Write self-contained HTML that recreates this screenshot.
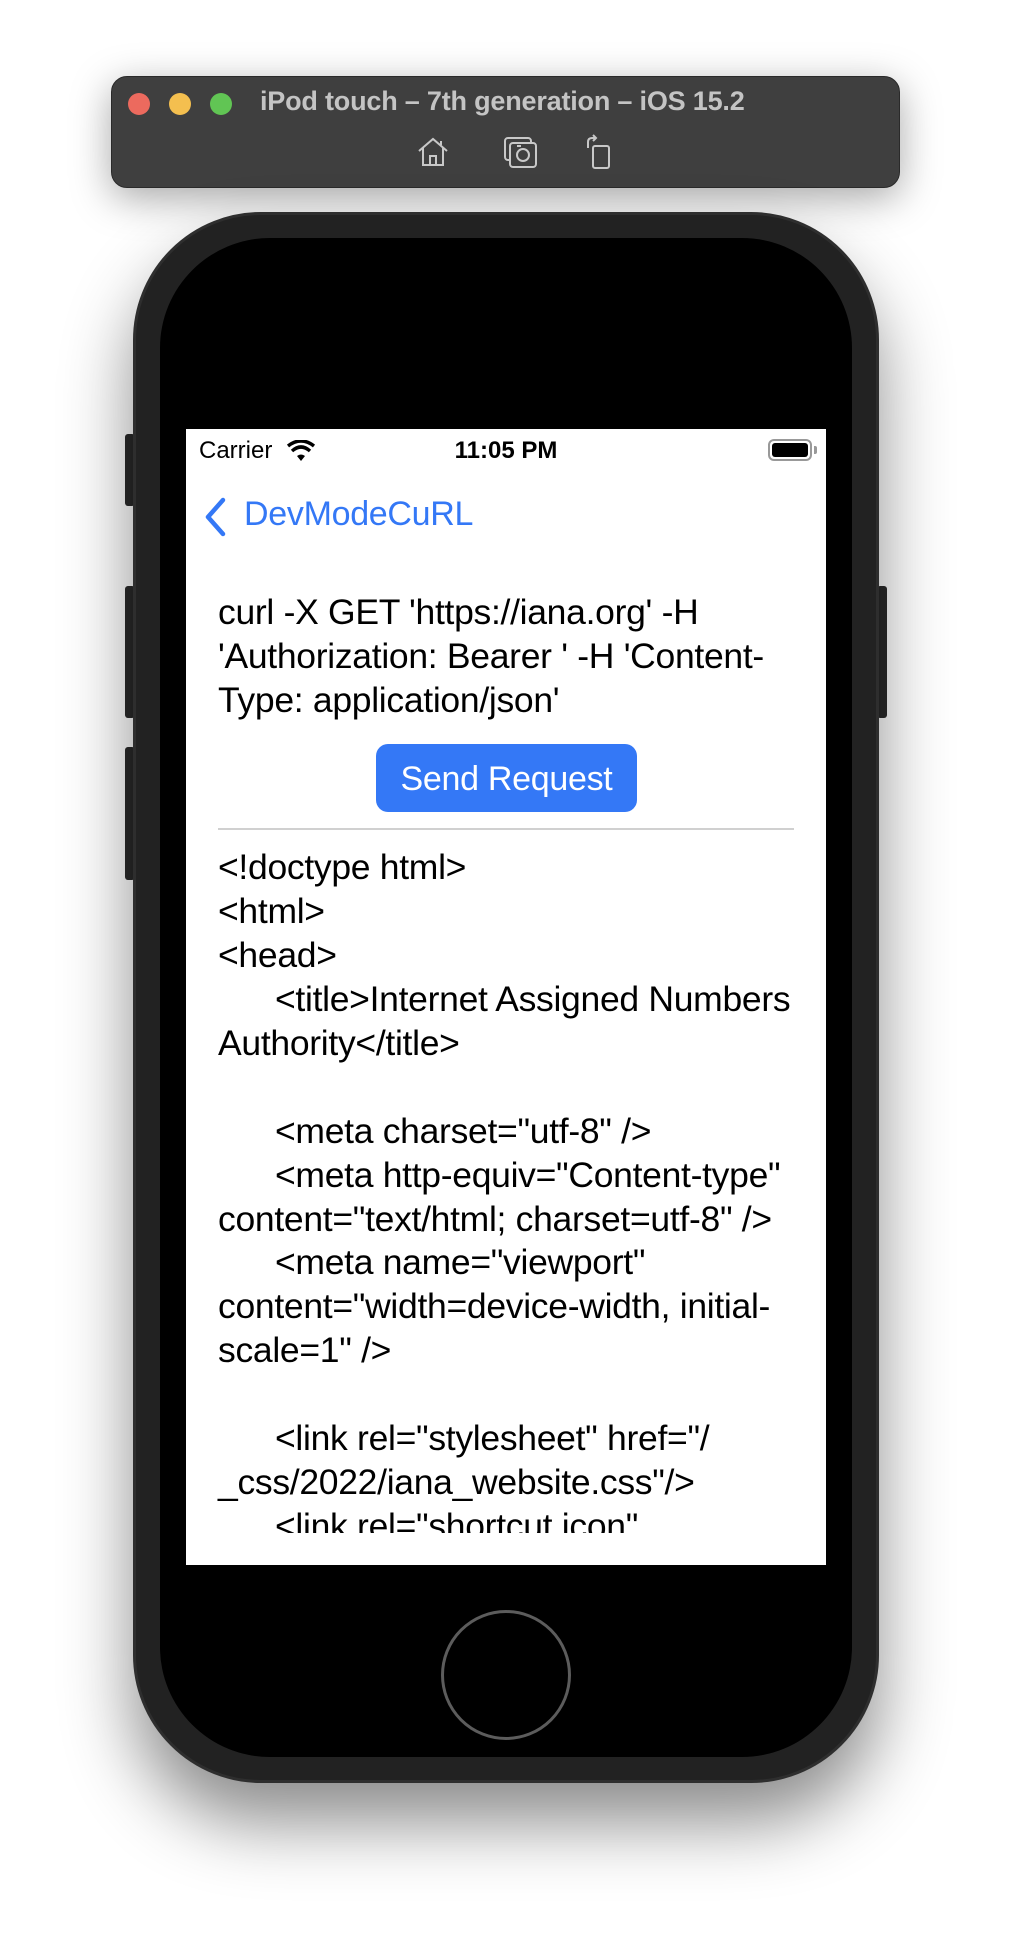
<!DOCTYPE html>
<html><head><meta charset="utf-8"><style>
*{margin:0;padding:0;box-sizing:border-box}
body{width:1012px;height:1936px;background:#fff;position:relative;overflow:hidden;font-family:"Liberation Sans",sans-serif}
.a{position:absolute}
.ln{position:absolute;left:218px;white-space:nowrap;font-size:35.5px;line-height:44px;height:44px;color:#000;letter-spacing:-0.3px}
.in{left:275px}
</style></head><body>
<!-- toolbar -->
<div class="a" style="left:111px;top:76px;width:789px;height:112px;background:#3f3f3f;border-radius:16px;border:1px solid #2a2a2a;box-shadow:0 10px 40px rgba(0,0,0,.35)"></div>
<div class="a" style="left:128px;top:93px;width:22px;height:22px;border-radius:50%;background:#ec6a5e"></div>
<div class="a" style="left:169px;top:93px;width:22px;height:22px;border-radius:50%;background:#f4bf4f"></div>
<div class="a" style="left:210px;top:93px;width:22px;height:22px;border-radius:50%;background:#61c554"></div>
<div class="a" style="left:260px;top:86px;font-size:27px;font-weight:bold;color:#c4c4c4;white-space:nowrap;letter-spacing:-0.2px">iPod touch – 7th generation – iOS 15.2</div>
<svg class="a" style="left:415px;top:136px" width="36" height="32" viewBox="0 0 36 32" fill="none" stroke="#c8c8c8" stroke-width="2"><path d="M4 15 L18 3 L32 15 M8 12 V29 H28 V12 M15 29 V20 H21 V29"/><path d="M26 5 V9"/></svg>
<svg class="a" style="left:502px;top:135px" width="36" height="34" viewBox="0 0 36 34" fill="none" stroke="#c8c8c8" stroke-width="2"><rect x="3" y="3" width="26" height="22" rx="3"/><rect x="8" y="8" width="26" height="24" rx="3" fill="#3f3f3f"/><circle cx="21" cy="20" r="6"/><path d="M15 11 h4"/></svg>
<svg class="a" style="left:584px;top:134px" width="30" height="36" viewBox="0 0 30 36" fill="none" stroke="#c8c8c8" stroke-width="2"><rect x="9" y="12" width="16" height="22" rx="2"/><path d="M4 14 V8 Q4 4 8 4 H12 M9 1 L12 4 L9 7"/></svg>
<!-- phone -->
<div class="a" style="left:125px;top:434px;width:10px;height:72px;background:#2a2a2a;border-radius:3px"></div>
<div class="a" style="left:125px;top:586px;width:10px;height:132px;background:#2a2a2a;border-radius:3px"></div>
<div class="a" style="left:125px;top:747px;width:10px;height:133px;background:#2a2a2a;border-radius:3px"></div>
<div class="a" style="left:877px;top:586px;width:10px;height:132px;background:#2a2a2a;border-radius:3px"></div>
<div class="a" style="left:133px;top:212px;width:746px;height:1571px;background:#222;border-radius:128px;border:3px solid #2e2e2e;box-shadow:0 40px 70px rgba(0,0,0,.45)"></div>
<div class="a" style="left:160px;top:238px;width:692px;height:1519px;background:#000;border-radius:110px"></div>
<div class="a" style="left:441px;top:1610px;width:130px;height:130px;border-radius:50%;border:3px solid #5c5c5c"></div>
<!-- screen -->
<div class="a" style="left:186px;top:429px;width:640px;height:1136px;background:#fff;overflow:hidden">
  <div class="a" style="left:13px;top:8px;font-size:24px;color:#000">Carrier</div>
  <svg class="a" style="left:100px;top:11px" width="30" height="22" viewBox="0 0 30 22"><path d="M15 21 L11 16 Q15 13 19 16 Z" fill="#000"/><path d="M6 11 Q15 3 24 11" stroke="#000" stroke-width="3.5" fill="none"/><path d="M2 6 Q15 -4 28 6" stroke="#000" stroke-width="3.5" fill="none"/></svg>
  <div class="a" style="left:0;width:640px;top:8px;text-align:center;font-size:24px;font-weight:bold;color:#000">11:05 PM</div>
  <div class="a" style="left:582px;top:10px;width:44px;height:22px;border:2px solid #999;border-radius:6px"><div style="margin:2px;height:14px;background:#000;border-radius:3px"></div></div>
  <div class="a" style="left:628px;top:17px;width:3px;height:8px;background:#999;border-radius:0 2px 2px 0"></div>
  <svg class="a" style="left:17px;top:68px" width="26" height="40" viewBox="0 0 26 40"><path d="M20 3 L5 20 L20 37" stroke="#3478f6" stroke-width="4.5" fill="none" stroke-linecap="round" stroke-linejoin="round"/></svg>
  <div class="a" style="left:58px;top:66px;font-size:34px;color:#3478f6;letter-spacing:-0.3px">DevModeCuRL</div>
</div>
<div class="ln" style="top:590px">curl -X GET 'https://iana.org' -H</div>
<div class="ln" style="top:634px">'Authorization: Bearer ' -H 'Content-</div>
<div class="ln" style="top:678px">Type: application/json'</div>
<div class="a" style="left:376px;top:744px;width:261px;height:68px;background:#3478f6;border-radius:12px;color:#fff;font-size:34px;line-height:70px;text-align:center;letter-spacing:-0.3px">Send Request</div>
<div class="a" style="left:218px;top:828px;width:576px;height:2px;background:#d0d0d0"></div>
<div class="a" style="left:186px;top:843px;width:640px;height:690px;overflow:hidden">
<div style="position:relative;left:-186px;top:-843px">
<div class="ln" style="top:845px">&lt;!doctype html&gt;</div>
<div class="ln" style="top:889px">&lt;html&gt;</div>
<div class="ln" style="top:933px">&lt;head&gt;</div>
<div class="ln in" style="top:977px">&lt;title&gt;Internet Assigned Numbers</div>
<div class="ln" style="top:1021px">Authority&lt;/title&gt;</div>
<div class="ln in" style="top:1109px">&lt;meta charset="utf-8" /&gt;</div>
<div class="ln in" style="top:1153px">&lt;meta http-equiv="Content-type"</div>
<div class="ln" style="top:1197px">content="text/html; charset=utf-8" /&gt;</div>
<div class="ln in" style="top:1240px">&lt;meta name="viewport"</div>
<div class="ln" style="top:1284px">content="width=device-width, initial-</div>
<div class="ln" style="top:1328px">scale=1" /&gt;</div>
<div class="ln in" style="top:1416px">&lt;link rel="stylesheet" href="/</div>
<div class="ln" style="top:1460px">_css/2022/iana_website.css"/&gt;</div>
<div class="ln in" style="top:1504px">&lt;link rel="shortcut icon"</div>
</div></div>
</body></html>
